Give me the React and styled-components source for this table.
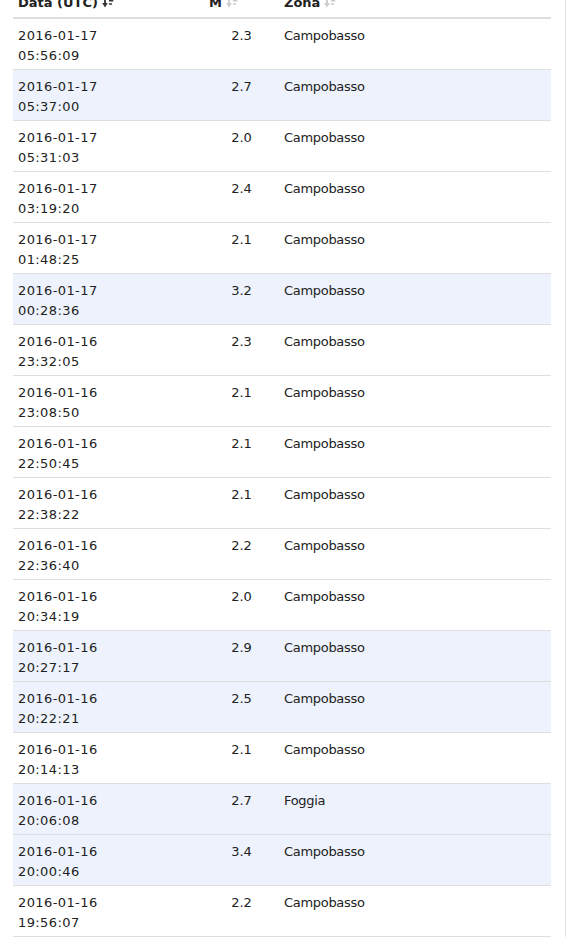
import React from 'react';
import styled, { createGlobalStyle } from 'styled-components';

const GlobalStyle = createGlobalStyle`
  html, body {
    margin: 0;
    padding: 0;
    background: #fff;
  }
  body {
    font-family: 'DejaVu Sans', Verdana, sans-serif;
    font-size: 13px;
    color: #222;
    overflow: hidden;
  }
`;

const Page = styled.div`
  width: 552px;
  height: 937px;
  padding: 0 0 0 13px;
  border-right: 1px solid #e2e2e2;
  overflow: hidden;
`;

const Table = styled.table`
  width: 538px;
  margin-top: -12px;
  border-collapse: collapse;
  table-layout: fixed;
  line-height: 20px;
`;

const HeadCell = styled.th`
  text-align: left;
  font-weight: bold;
  padding: 5px 5px 4px;
  border-bottom: 2px solid #dedede;
  white-space: nowrap;
  color: #222;
`;

const Row = styled.tr`
  background: ${(p) => (p.$strong ? '#edf2fc' : '#fff')};
  border-bottom: 1px solid #dedede;
`;

const Cell = styled.td`
  padding: 7px 5px 3px;
  vertical-align: top;
  text-align: ${(p) => p.$align || 'left'};
  letter-spacing: ${(p) => p.$spacing || '0'};
`;

const SortIcon = ({ active }) => {
  const c = active ? '#333' : '#ccc';
  return (
    <svg width="13" height="12" viewBox="0 0 13 12" style={{ marginLeft: 4, verticalAlign: -1 }}>
      <path d="M3 0.5v8.5" stroke={c} strokeWidth="1.8" />
      <path d="M0.2 7l2.8 4.5 2.8-4.5z" fill={c} />
      <path d="M7 1.2h5.5M7 4.6h4.3M7 8h3" stroke={c} strokeWidth="1.6" />
    </svg>
  );
};

const rows = [
  ['2016-01-17', '05:56:09', '2.3', 'Campobasso'],
  ['2016-01-17', '05:37:00', '2.7', 'Campobasso'],
  ['2016-01-17', '05:31:03', '2.0', 'Campobasso'],
  ['2016-01-17', '03:19:20', '2.4', 'Campobasso'],
  ['2016-01-17', '01:48:25', '2.1', 'Campobasso'],
  ['2016-01-17', '00:28:36', '3.2', 'Campobasso'],
  ['2016-01-16', '23:32:05', '2.3', 'Campobasso'],
  ['2016-01-16', '23:08:50', '2.1', 'Campobasso'],
  ['2016-01-16', '22:50:45', '2.1', 'Campobasso'],
  ['2016-01-16', '22:38:22', '2.1', 'Campobasso'],
  ['2016-01-16', '22:36:40', '2.2', 'Campobasso'],
  ['2016-01-16', '20:34:19', '2.0', 'Campobasso'],
  ['2016-01-16', '20:27:17', '2.9', 'Campobasso'],
  ['2016-01-16', '20:22:21', '2.5', 'Campobasso'],
  ['2016-01-16', '20:14:13', '2.1', 'Campobasso'],
  ['2016-01-16', '20:06:08', '2.7', 'Foggia'],
  ['2016-01-16', '20:00:46', '3.4', 'Campobasso'],
  ['2016-01-16', '19:56:07', '2.2', 'Campobasso'],
];

export default function App() {
  return (
    <Page>
      <GlobalStyle />
      <Table>
        <colgroup>
          <col style={{ width: 191 }} />
          <col style={{ width: 75 }} />
          <col />
        </colgroup>
        <thead>
          <tr>
            <HeadCell>
              Data (UTC)
              <SortIcon active />
            </HeadCell>
            <HeadCell>
              M
              <SortIcon />
            </HeadCell>
            <HeadCell>
              Zona
              <SortIcon />
            </HeadCell>
          </tr>
        </thead>
        <tbody>
          {rows.map(([d, t, m, z]) => (
            <Row key={d + t} $strong={parseFloat(m) >= 2.5}>
              <Cell $spacing="0.4px">
                {d}
                <br />
                {t}
              </Cell>
              <Cell $align="center">{m}</Cell>
              <Cell $spacing="-0.3px">{z}</Cell>
            </Row>
          ))}
        </tbody>
      </Table>
    </Page>
  );
}
